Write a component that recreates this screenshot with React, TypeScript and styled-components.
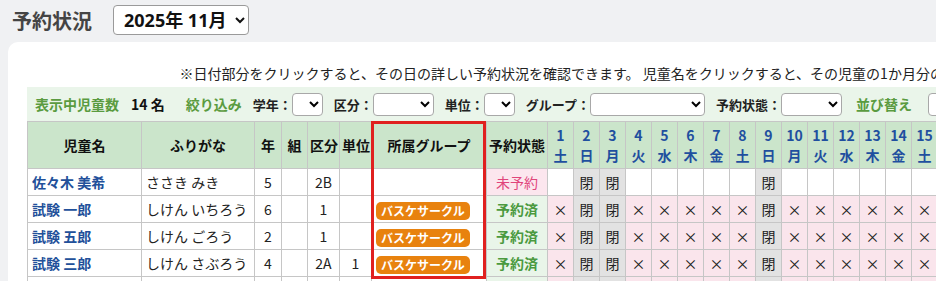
import React from 'react';
import styled, { createGlobalStyle } from 'styled-components';

const GlobalStyle = createGlobalStyle`
  html, body {
    margin: 0;
    padding: 0;
    overflow: hidden;
    background: #f0f1f3;
    font-family: "Noto Sans CJK JP", "Noto Sans", sans-serif;
    color: #222;
  }
`;

const WEEK = ['日', '月', '火', '水', '木', '金', '土'];
const CLOSED = [2, 3, 9, 16, 23, 24, 30];
const days = Array.from({ length: 30 }, (_, i) => ({
  day: i + 1,
  week: WEEK[(i + 6) % 7],
  closed: CLOSED.includes(i + 1),
}));

interface Child {
  name: string;
  kana: string;
  grade: string;
  kumi: string;
  kubun: string;
  unit: string;
  group: string;
  booked: boolean;
}

const children: Child[] = [
  { name: '佐々木 美希', kana: 'ささき みき', grade: '5', kumi: '', kubun: '2B', unit: '', group: '', booked: false },
  { name: '試験 一郎', kana: 'しけん いちろう', grade: '6', kumi: '', kubun: '1', unit: '', group: 'バスケサークル', booked: true },
  { name: '試験 五郎', kana: 'しけん ごろう', grade: '2', kumi: '', kubun: '1', unit: '', group: 'バスケサークル', booked: true },
  { name: '試験 三郎', kana: 'しけん さぶろう', grade: '4', kumi: '', kubun: '2A', unit: '1', group: 'バスケサークル', booked: true },
  { name: '試験 二郎', kana: 'しけん じろう', grade: '3', kumi: '', kubun: '1', unit: '', group: '', booked: true },
  { name: '試験 四郎', kana: 'しけん しろう', grade: '1', kumi: '', kubun: '2A', unit: '', group: '', booked: false },
];

const App = () => {
  return (
    <>
      <GlobalStyle />
      <Page>
        <TitleRow>
          <Title>予約状況</Title>
          <MonthSelect defaultValue="2025-11">
            <option value="2025-11">2025年 11月</option>
          </MonthSelect>
        </TitleRow>
        <Card>
          <Note>
            ※日付部分をクリックすると、その日の詳しい予約状況を確認できます。 児童名をクリックすると、その児童の1か月分の予約状況を確認できます。
          </Note>
          <FilterBar>
            <GreenLabel>表示中児童数</GreenLabel>
            <Count>14 名</Count>
            <GreenLabel $gap={21}>絞り込み</GreenLabel>
            <Field>
              <FieldLabel>学年：</FieldLabel>
              <FilterSelect $w={31} />
            </Field>
            <Field>
              <FieldLabel>区分：</FieldLabel>
              <FilterSelect $w={61} />
            </Field>
            <Field>
              <FieldLabel>単位：</FieldLabel>
              <FilterSelect $w={31} />
            </Field>
            <Field>
              <FieldLabel>グループ：</FieldLabel>
              <FilterSelect $w={115} />
            </Field>
            <Field>
              <FieldLabel>予約状態：</FieldLabel>
              <FilterSelect $w={61} />
            </Field>
            <GreenLabel $gap={14}>並び替え</GreenLabel>
            <SortSelect />
          </FilterBar>
          <TableWrap>
            <Table>
              <colgroup>
                <col style={{ width: 114 }} />
                <col style={{ width: 113 }} />
                <col style={{ width: 27 }} />
                <col style={{ width: 26 }} />
                <col style={{ width: 32 }} />
                <col style={{ width: 32 }} />
                <col style={{ width: 115 }} />
                <col style={{ width: 61 }} />
                {days.map((d) => (
                  <col key={d.day} style={{ width: 26 }} />
                ))}
              </colgroup>
              <thead>
                <tr>
                  <Th>児童名</Th>
                  <Th>ふりがな</Th>
                  <Th>年</Th>
                  <Th>組</Th>
                  <Th>区分</Th>
                  <Th>単位</Th>
                  <Th>所属グループ</Th>
                  <Th>予約状態</Th>
                  {days.map((d) => (
                    <DayTh key={d.day}>
                      {d.day}
                      <br />
                      {d.week}
                    </DayTh>
                  ))}
                </tr>
              </thead>
              <tbody>
                {children.map((c) => (
                  <tr key={c.name}>
                    <NameTd>{c.name}</NameTd>
                    <KanaTd>{c.kana}</KanaTd>
                    <Td>{c.grade}</Td>
                    <Td>{c.kumi}</Td>
                    <Td>{c.kubun}</Td>
                    <Td>{c.unit}</Td>
                    <GroupTd>{c.group && <Badge>{c.group}</Badge>}</GroupTd>
                    <StatusTd $booked={c.booked}>{c.booked ? '予約済' : '未予約'}</StatusTd>
                    {days.map((d) => (
                      <DayTd key={d.day} $kind={d.closed ? 'closed' : c.booked ? 'booked' : 'empty'}>
                        {d.closed ? '閉' : c.booked ? '×' : ''}
                      </DayTd>
                    ))}
                  </tr>
                ))}
              </tbody>
            </Table>
            <Highlight />
          </TableWrap>
        </Card>
      </Page>
    </>
  );
};

const Page = styled.div`
  padding: 5px 0 0 8px;
`;

const TitleRow = styled.div`
  display: flex;
  align-items: center;
  gap: 21px;
  padding-left: 4px;
  height: 30px;
`;

const Title = styled.h1`
  margin: 0;
  font-size: 20px;
  font-weight: 700;
  color: #444;
`;

const MonthSelect = styled.select`
  width: 136px;
  height: 30px;
  font-family: "Noto Sans", "Noto Sans CJK JP", sans-serif;
  font-size: 18px;
  font-weight: 700;
  color: #111;
  background: #fff;
  border: 1px solid #9a9a9a;
  border-radius: 4px;
  padding: 0 6px;
`;

const Card = styled.div`
  margin-top: 7px;
  background: #fff;
  border-radius: 10px 0 0 0;
  padding: 20px 19px;
  width: max-content;
`;

const Note = styled.p`
  margin: 0 0 3px;
  font-size: 14px;
  line-height: 22px;
  color: #222;
  text-align: center;
  padding-right: 65px;
`;

const FilterBar = styled.div`
  display: flex;
  align-items: center;
  height: 34px;
  padding: 0 8px;
  background: #eaf5ea;
  white-space: nowrap;
`;

const GreenLabel = styled.span<{ $gap?: number }>`
  margin-left: ${(p) => p.$gap ?? 0}px;
  font-size: 14px;
  font-weight: 700;
  color: #5a9b40;
`;

const Count = styled.span`
  margin-left: 12px;
  font-size: 14px;
  font-weight: 700;
  color: #111;
`;

const Field = styled.label`
  display: flex;
  align-items: center;
  margin-left: 11px;
`;

const FieldLabel = styled.span`
  font-size: 13px;
  font-weight: 700;
  color: #222;
`;

const FilterSelect = styled.select<{ $w: number }>`
  width: ${(p) => p.$w}px;
  height: 23px;
  background: #fff;
  border: 1px solid #a8a8a8;
  border-radius: 4px;
`;

const SortSelect = styled(FilterSelect).attrs({ $w: 120 })`
  margin-left: 16px;
`;

const TableWrap = styled.div`
  position: relative;
`;

const Table = styled.table`
  border-collapse: collapse;
  table-layout: fixed;
  width: 1299px;
  font-size: 14px;
`;

const Th = styled.th`
  height: 46px;
  padding: 0 2px;
  background: #cbe5cb;
  border: 1px solid #c6c6c6;
  font-weight: 700;
  color: #111;
  white-space: nowrap;
`;

const DayTh = styled(Th)`
  padding: 0;
  line-height: 20px;
  color: #1f4f9f;
  cursor: pointer;
`;

const Td = styled.td`
  height: 26px;
  padding: 0 4px;
  border: 1px solid #c6c6c6;
  text-align: center;
  white-space: nowrap;
`;

const NameTd = styled(Td)`
  text-align: left;
  font-weight: 700;
  color: #22509a;
  cursor: pointer;
`;

const KanaTd = styled(Td)`
  text-align: left;
`;

const GroupTd = styled(Td)`
  text-align: left;
`;

const Badge = styled.span`
  display: inline-block;
  height: 18px;
  line-height: 18px;
  padding: 0 5px;
  border-radius: 5px;
  background: #e8820e;
  color: #fff;
  font-size: 12px;
  font-weight: 700;
  vertical-align: middle;
`;

const StatusTd = styled(Td)<{ $booked: boolean }>`
  padding: 0;
  background: ${(p) => (p.$booked ? '#e9f5e9' : '#fce6ee')};
  color: ${(p) => (p.$booked ? '#4b9a3f' : '#e0457b')};
  font-weight: ${(p) => (p.$booked ? 700 : 400)};
`;

const DayTd = styled(Td)<{ $kind: 'closed' | 'booked' | 'empty' }>`
  padding: 0;
  background: ${(p) => (p.$kind === 'closed' ? '#e2e2e2' : p.$kind === 'booked' ? '#fae5ec' : '#fff')};
  color: #222;
`;

const Highlight = styled.div`
  position: absolute;
  left: 344px;
  top: 0;
  width: 115px;
  height: 158px;
  box-sizing: border-box;
  border: 3px solid #e0201f;
  pointer-events: none;
`;

export default App;
